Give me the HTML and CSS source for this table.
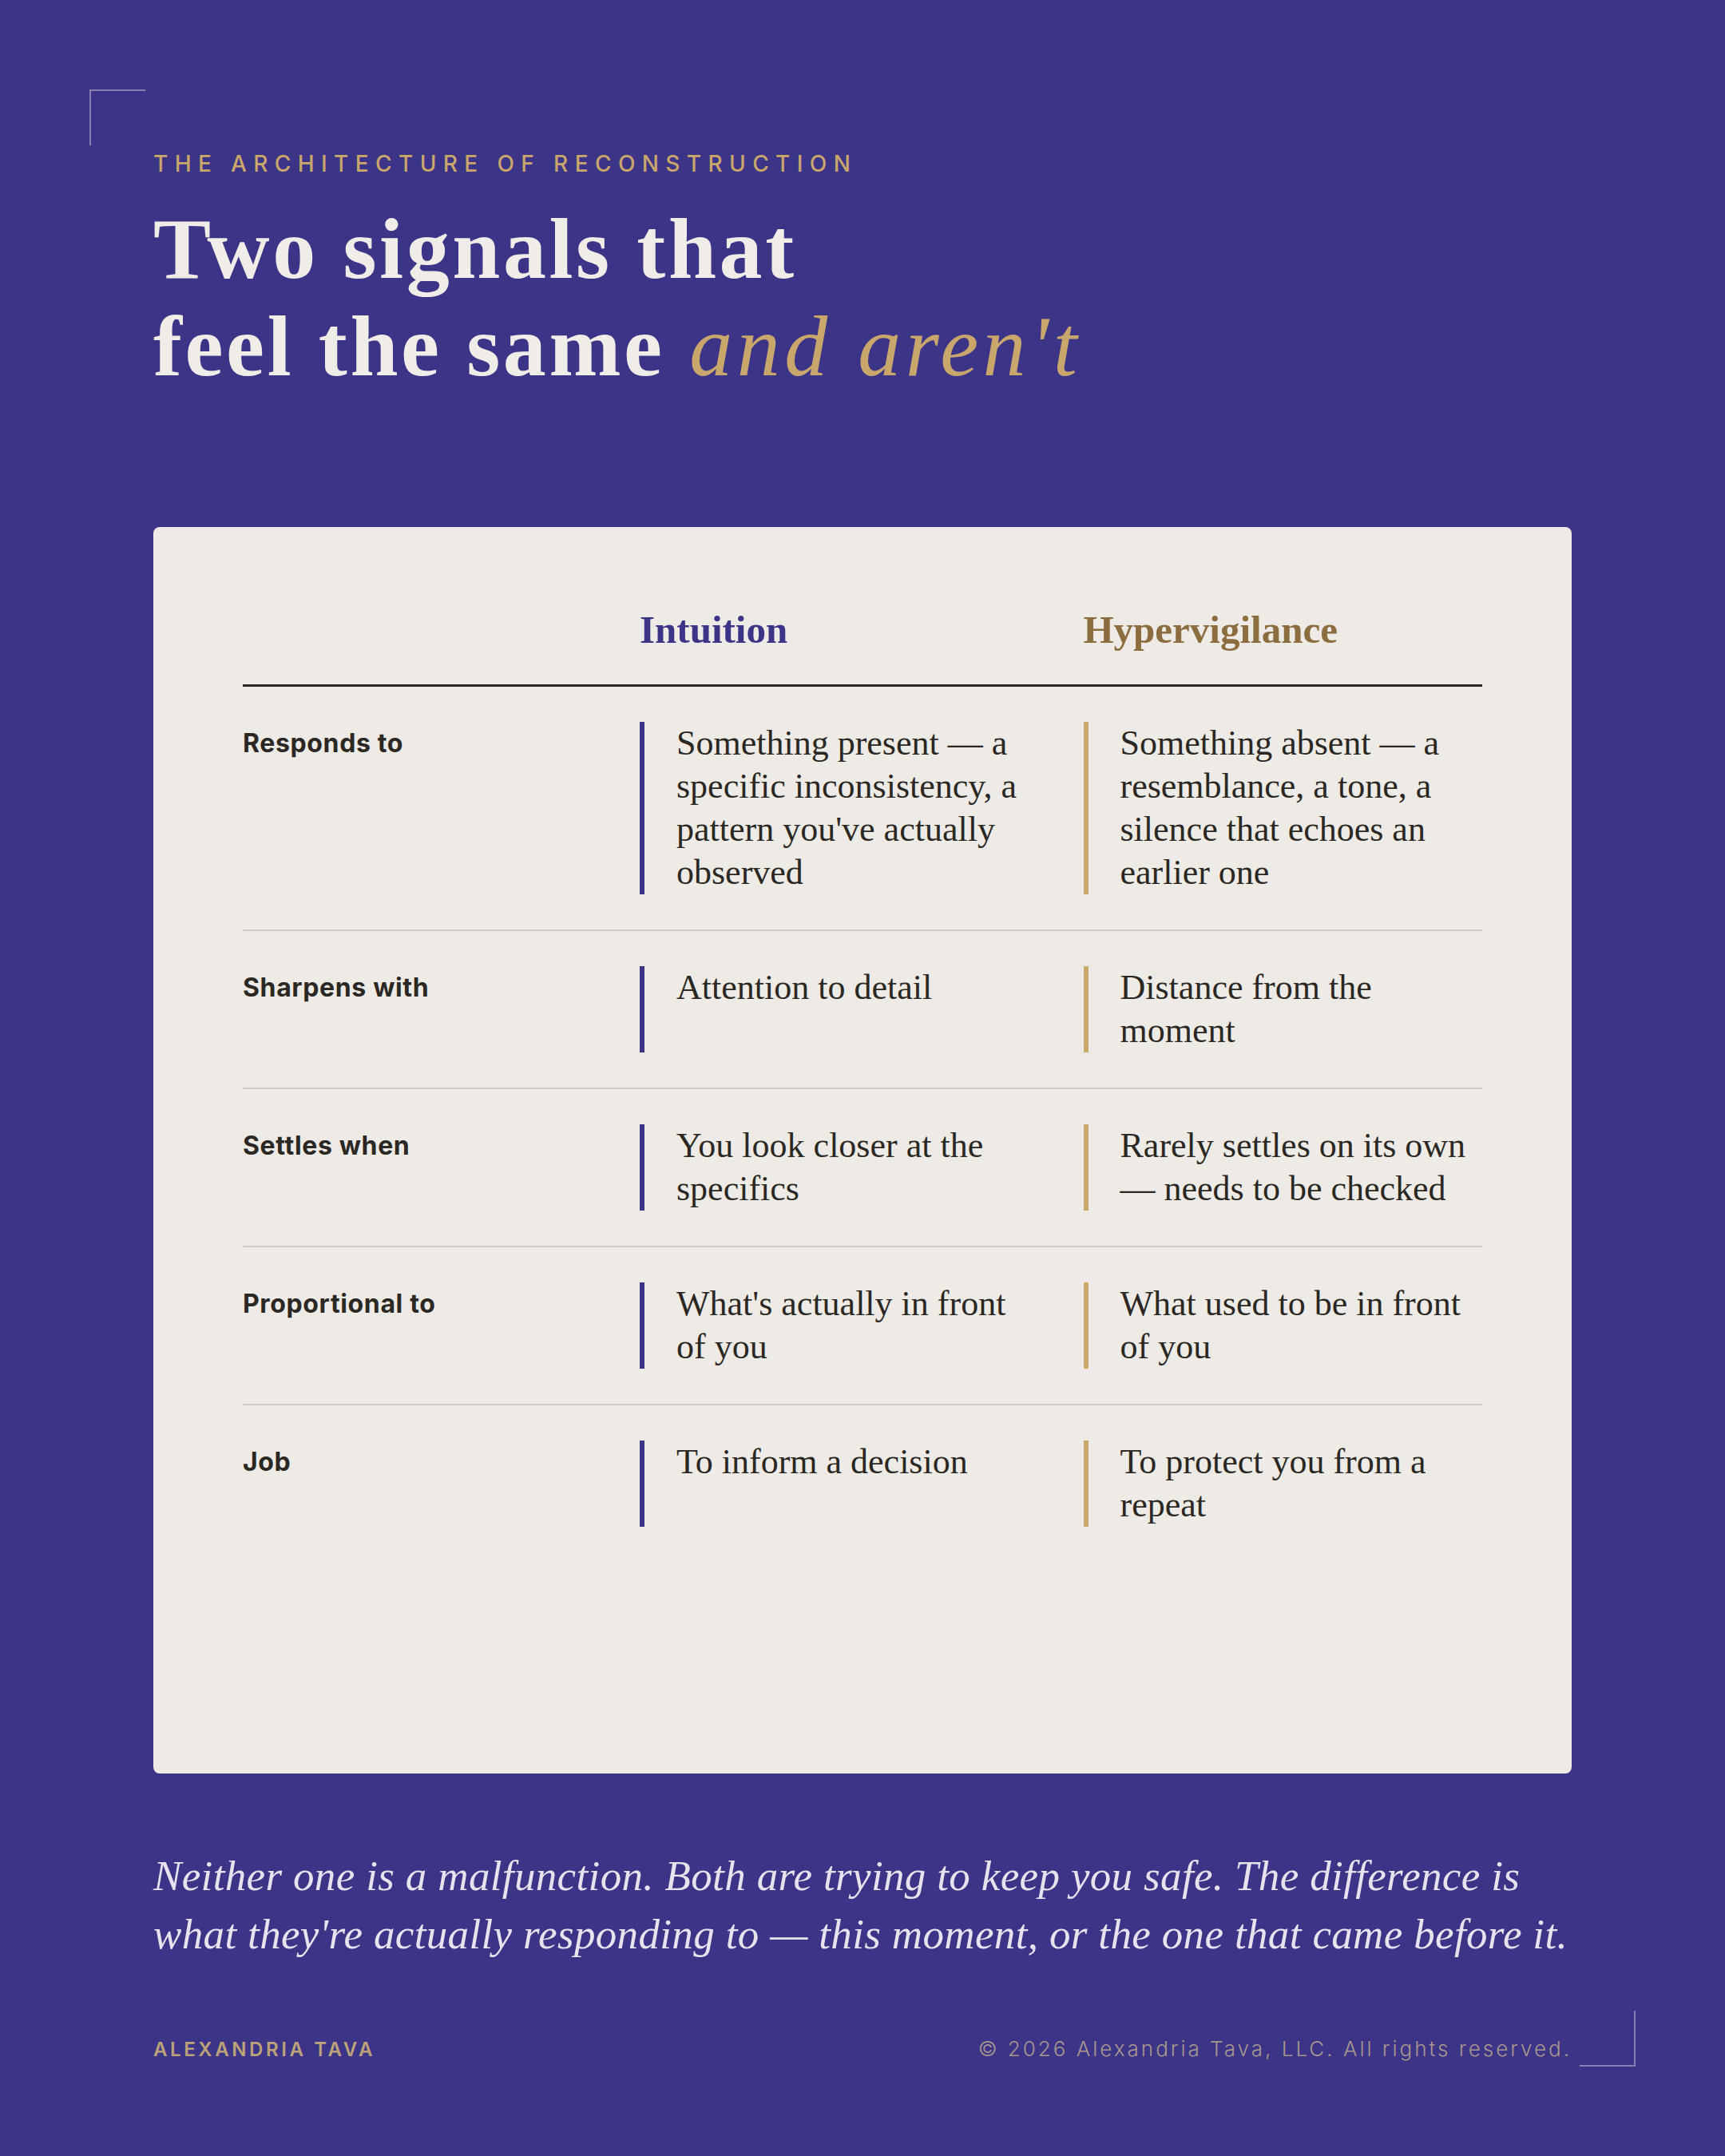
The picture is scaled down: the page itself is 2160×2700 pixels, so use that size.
FILE: index.html
```html
<!DOCTYPE html>
<html lang="en">
<head>
<meta charset="utf-8">
<title>Two signals that feel the same and aren't</title>
<link rel="stylesheet" href="styles.css">
</head>
<body>
<div class="page">
  <span class="corner corner-tl"></span>
  <span class="corner corner-br"></span>

  <header class="intro">
    <p class="eyebrow">The Architecture of Reconstruction</p>
    <h1 class="title">Two signals that<br>feel the same <em>and aren't</em></h1>
  </header>

  <section class="card">
    <div class="grid head">
      <div></div>
      <div class="col-title col-title-int">Intuition</div>
      <div class="col-title col-title-hyp">Hypervigilance</div>
    </div>

    <div class="grid row">
      <div class="label">Responds to</div>
      <div class="cell cell-int">Something present — a specific inconsistency, a pattern you've actually observed</div>
      <div class="cell cell-hyp">Something absent — a resemblance, a tone, a silence that echoes an earlier one</div>
    </div>

    <div class="grid row">
      <div class="label">Sharpens with</div>
      <div class="cell cell-int">Attention to detail</div>
      <div class="cell cell-hyp">Distance from the moment</div>
    </div>

    <div class="grid row">
      <div class="label">Settles when</div>
      <div class="cell cell-int">You look closer at the specifics</div>
      <div class="cell cell-hyp">Rarely settles on its own — needs to be checked</div>
    </div>

    <div class="grid row">
      <div class="label">Proportional to</div>
      <div class="cell cell-int">What's actually in front of you</div>
      <div class="cell cell-hyp">What used to be in front of you</div>
    </div>

    <div class="grid row row-last">
      <div class="label">Job</div>
      <div class="cell cell-int">To inform a decision</div>
      <div class="cell cell-hyp">To protect you from a repeat</div>
    </div>
  </section>

  <p class="quote">Neither one is a malfunction. Both are trying to keep you safe. The difference is what they're actually responding to — this moment, or the one that came before it.</p>

  <footer class="footer">
    <span class="brand">Alexandria Tava</span>
    <span class="copy">© 2026 Alexandria Tava, LLC. All rights reserved.</span>
  </footer>
</div>
</body>
</html>
```

FILE: styles.css
```css
* {
  box-sizing: border-box;
}

html,
body {
  margin: 0;
  padding: 0;
  background: #3c3486;
}

.page {
  position: relative;
  width: 2160px;
  height: 2700px;
  padding: 189px 192px 118px;
  display: flex;
  flex-direction: column;
  background: #3c3486;
  font-family: "Liberation Serif", "Times New Roman", serif;
}

.corner {
  position: absolute;
  width: 70px;
  height: 70px;
  border-color: rgba(214, 200, 222, 0.5);
  border-style: solid;
  border-width: 0;
}

.corner-tl {
  top: 112px;
  left: 112px;
  border-top-width: 2px;
  border-left-width: 2px;
}

.corner-br {
  bottom: 112px;
  right: 112px;
  border-bottom-width: 2px;
  border-right-width: 2px;
}

/* Intro */
.eyebrow {
  margin: 0;
  font-family: "Inter", "Liberation Sans", sans-serif;
  font-weight: 500;
  font-size: 28px;
  line-height: 1.2;
  letter-spacing: 0.3em;
  text-transform: uppercase;
  color: #c9a66b;
}

.title {
  margin: 28px 0 0;
  font-family: "Liberation Serif", "Times New Roman", serif;
  font-weight: 700;
  font-size: 108px;
  line-height: 122px;
  letter-spacing: 3.6px;
  color: #f0ede8;
}

.title em {
  font-style: italic;
  font-weight: 400;
  letter-spacing: 5.5px;
  color: #c9a66b;
}

/* Card */
.card {
  flex: 1;
  margin-top: 165px;
  padding: 100px 112px 0;
  background: #eeebe6;
  border-radius: 8px;
}

.grid {
  display: grid;
  grid-template-columns: 441px 1fr 1fr;
  column-gap: 56px;
}

.head {
  padding-bottom: 39px;
  border-bottom: 3px solid #2b2824;
}

.col-title {
  font-weight: 700;
  font-size: 49px;
  line-height: 1.2;
}

.col-title-int {
  color: #3c3486;
}

.col-title-hyp {
  color: #8b6d3f;
}

.row {
  padding: 44px 0;
  border-bottom: 2px solid #d1ccc6;
}

.row-last {
  border-bottom: 0;
}

.label {
  font-family: "Inter", "Liberation Sans", sans-serif;
  font-weight: 700;
  font-size: 32px;
  line-height: 54px;
  color: #2b2824;
  letter-spacing: 0.02em;
}

.cell {
  padding: 0 16px 0 40px;
  border-left: 6px solid;
  font-size: 44px;
  line-height: 54px;
  color: #2b2824;
}

.cell-int {
  border-left-color: #3c3486;
}

.cell-hyp {
  border-left-color: #c9a86b;
}

/* Quote */
.quote {
  margin: 92px 0 0;
  font-style: italic;
  font-size: 53px;
  line-height: 73px;
  letter-spacing: 0.35px;
  color: #e7e3ee;
}

/* Footer */
.footer {
  margin-top: 92px;
  display: flex;
  justify-content: space-between;
  align-items: baseline;
  font-family: "Inter", "Liberation Sans", sans-serif;
  font-size: 24px;
  line-height: 30px;
}

.brand {
  font-weight: 600;
  letter-spacing: 0.15em;
  text-transform: uppercase;
  color: #bca27a;
}

.copy {
  font-weight: 300;
  font-size: 26px;
  letter-spacing: 3px;
  color: #a8978f;
}
```
